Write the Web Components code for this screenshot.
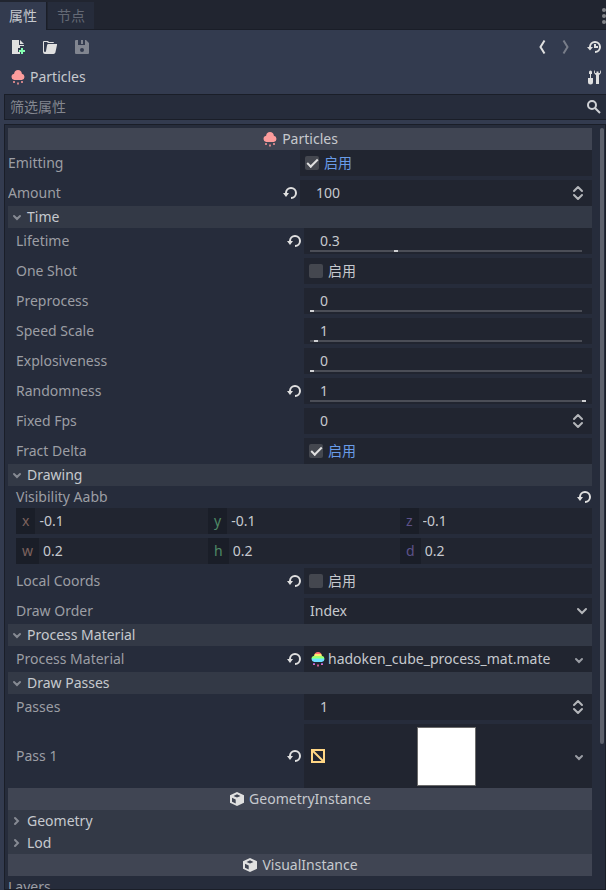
<!DOCTYPE html>
<html lang="zh-CN">
<head>
<meta charset="utf-8">
<title>Inspector</title>
<style>
:root{
  --base:#333b4f; --dark:#262c3b; --darker:#212530; --edge:#1a1e28;
  --category:#404553; --section:#333946;
  --text:#c6c9ce; --label:#9c9ea4; --accent:#699ce8; --icon:#e0e0e0; --box:#44474f;
}
html,body{margin:0;height:100%;background:var(--base)}
body{font:14px/22px "Noto Sans","Noto Sans CJK SC",sans-serif;color:var(--text);overflow:hidden}
</style>
</head>
<body>
<inspector-dock>
  <property-tree>
    <prop-category icon="particles">Particles</prop-category>
    <prop-group>
      <prop-check label="Emitting" checked></prop-check>
      <prop-number label="Amount" value="100" revert></prop-number>
    </prop-group>
    <prop-section name="Time" open>
      <prop-slider label="Lifetime" value="0.3" pos="31" revert></prop-slider>
      <prop-check label="One Shot"></prop-check>
      <prop-slider label="Preprocess" value="0" pos="0"></prop-slider>
      <prop-slider label="Speed Scale" value="1" pos="1.5"></prop-slider>
      <prop-slider label="Explosiveness" value="0" pos="0"></prop-slider>
      <prop-slider label="Randomness" value="1" pos="100" revert></prop-slider>
      <prop-number label="Fixed Fps" value="0"></prop-number>
      <prop-check label="Fract Delta" checked></prop-check>
    </prop-section>
    <prop-section name="Drawing" open>
      <prop-aabb label="Visibility Aabb"></prop-aabb>
      <prop-check label="Local Coords" revert></prop-check>
      <prop-select label="Draw Order" value="Index"></prop-select>
    </prop-section>
    <prop-section name="Process Material" open>
      <prop-resource label="Process Material" icon="material" revert>hadoken_cube_process_mat.mate</prop-resource>
    </prop-section>
    <prop-section name="Draw Passes" open>
      <prop-number label="Passes" value="1"></prop-number>
      <prop-resource label="Pass 1" icon="mesh" preview revert></prop-resource>
    </prop-section>
    <prop-category icon="cube">GeometryInstance</prop-category>
    <prop-section name="Geometry"></prop-section>
    <prop-section name="Lod"></prop-section>
    <prop-category icon="cube">VisualInstance</prop-category>
    <prop-heading label="Layers"></prop-heading>
  </property-tree>
</inspector-dock>

<script>
const CLOUD = 'M8 1a4 4.4 0 0 0-3.9 3.7A3.2 3.2 0 0 0 4.2 11h7.6a3.2 3.2 0 0 0 .1-6.3A4 4.4 0 0 0 8 1z';
const DROPS = '<path d="M3 12h2v2H3zM11 12h2v2h-2zM7 13.5h2v2H7z"';
const ICONS = {
  particles: `<path fill="#fc9c9c" d="${CLOUD}"/>${DROPS} fill="#cc8187"/>`,
  material: `<defs><linearGradient id="g" x1="0" y1="1" x2="0" y2="11" gradientUnits="userSpaceOnUse">
    <stop offset=".2" stop-color="#ff7070"/><stop offset=".2" stop-color="#ffeb70"/><stop offset=".42" stop-color="#ffeb70"/>
    <stop offset=".42" stop-color="#9dff70"/><stop offset=".6" stop-color="#9dff70"/><stop offset=".6" stop-color="#70ffb9"/>
    <stop offset=".72" stop-color="#70ffb9"/><stop offset=".72" stop-color="#70deff"/></linearGradient></defs>
    <path fill="url(#g)" d="${CLOUD}"/><path fill="#9f70ff" opacity=".75" d="M3 12h2v2H3zM11 12h2v2h-2z"/><path fill="#ff70ac" opacity=".75" d="M3 13h2v1H3zM11 13h2v1h-2zM7 13.500h2v2H7z"/>`,
  mesh: '<path fill="none" stroke="#ffd684" stroke-width="2" d="M2 2h12v12H2zM2 2l12 12"/>',
  cube: '<path fill-rule="evenodd" fill="#e0e0e0" d="M8 1l7 3.200v7.600L8 15l-7-3.200V4.200zM8 3.200L4.500 4.900 8 6.600l3.500-1.700zM3 6.700V10.700L6.700 12.500V8.500z"/>',
  reload: '<path d="M9 2a6 6 0 0 0-6 6H1l3 4 3-4H5a4 4 0 1 1 4 4v2A6 6 0 1 0 9 2z"/>',
  newfile: '<path d="M2 1v14h8v-2H8v-4h2V7h4V6H9V1zM10 1v4h4z"/><path fill="#84ffb1" d="M11 9h2v2h2v2h-2v2h-2v-2H9v-2h2z"/>',
  load: '<path d="M2 2a1 1 0 0 0-1 1v10a2 2 0 0 0 2 2h8.500a2 2 0 0 0 1.900-1.500L15 6V5H6.500A1.500 1.500 0 0 0 5 6.400L4 12a1 1 0 0 1-2 0V3h3l1 1h6a1 1 0 0 0-1-1H7L6 2z"/>',
  save: '<path opacity=".45" fill-rule="evenodd" d="M2 1a1 1 0 0 0-1 1v12a1 1 0 0 0 1 1h12a1 1 0 0 0 1-1V4l-3-3h-1v5H4V1zm5 0v4h2V1zM8 9a2 2 0 1 1 0 4 2 2 0 0 1 0-4z"/>',
  back: '<path fill="none" stroke="#e0e0e0" stroke-width="2" d="M10.500 1.500L6.500 8l4 6.500"/>',
  forward: '<path fill="none" stroke="#e0e0e0" stroke-width="2" opacity=".4" d="M5.500 1.500l4 6.500-4 6.500"/>',
  history: '<path d="M9 2a6 6 0 0 0-6 6H1l3 3.500L7 8H5a4 4 0 1 1 4 4v2A6 6 0 1 0 9 2z"/><path d="M8 5h2v2h2v2H8z"/>',
  tools: '<path d="M3 3a1.500 1.500 0 0 1 3 0v2H5v4h2v4a2.500 2.500 0 0 1-5 0V9h2V5H3zM9 1a3 3 0 0 0 1 5v9h3V6a3 3 0 0 0 1-5v3h-1.500V2.500h-2V4H9z"/>',
  search: '<circle cx="6" cy="6" r="4" fill="none" stroke="#d0d2d6" stroke-width="2"/><path stroke="#d0d2d6" stroke-width="2" d="M9 9l5 5"/>',
  down: '<path fill="none" stroke="#9a9da4" stroke-width="2" stroke-linecap="round" d="M5 8l3 3 3-3"/>',
  option: '<path fill="none" stroke="#b4b6ba" stroke-width="2" stroke-linecap="round" d="M4 6l4 4 4-4"/>',
  spin: '<path fill="none" stroke="#b4b6ba" stroke-width="2" stroke-linecap="round" stroke-linejoin="round" d="M4 6l4-4 4 4M4 10l4 4 4-4"/>',
  opened: '<path fill="none" stroke="#868a93" stroke-width="2" stroke-linecap="round" d="M6 7l3 3 3-3"/>',
  closed: '<path fill="none" stroke="#868a93" stroke-width="2" stroke-linecap="round" d="M7 5l3 3-3 3"/>',
  dots: '<circle cx="4" cy="3" r="2"/><circle cx="4" cy="9" r="2"/><circle cx="4" cy="15" r="2"/>'
};
const icon = (name, h = 16) => `<svg viewBox="0 0 16 ${h}" width="16" height="${h}" fill="#e0e0e0" aria-hidden="true">${ICONS[name]}</svg>`;
const BASE = `
  *{box-sizing:border-box}
  :host{display:block}
  svg{display:block;flex:none}
  button,input,select{font:inherit;color:inherit;background:none;border:0;margin:0;padding:0;border-radius:0;outline:none;min-width:0}
  button{display:flex;align-items:center;text-align:left}`;

class Base extends HTMLElement {
  constructor() {
    super();
    this.attachShadow({ mode: 'open' });
  }
  connectedCallback() {
    this.shadowRoot.innerHTML = `<style>${BASE}${this.css()}</style>${this.html()}`;
  }
  attr(n) { return this.getAttribute(n) || ''; }
}

class InspectorDock extends Base {
  css() { return `
    :host{display:flex;flex-direction:column;height:100vh;overflow:hidden}
    nav{display:flex;height:30px;padding-top:2px;background:var(--darker);border-bottom:1px solid var(--edge);flex:none}
    nav button{padding:0 9px;height:28px;margin-bottom:-1px}
    .on{background:var(--base);border-right:1px solid var(--edge)}
    .off{background:var(--dark);margin-left:1px;height:27px;color:#646975}
    .menu{margin-left:auto;margin-right:-10px;padding:0;opacity:.5}
    .bar{display:flex;align-items:center;height:30px;padding:0 4px 0 10px;flex:none}
    .tools{margin-top:2px;gap:16px}
    .right{display:flex;gap:8px;margin-left:auto}
    .right > :last-child{margin-left:4px}
    .name{gap:4px}
    .name button{margin-left:auto}
    .search{display:flex;align-items:center;height:26px;margin:2px 0 4px 4px;padding:0 4px 0 5px;background:var(--dark);border:1px solid var(--edge);border-right:0;flex:none}
    .search input{flex:1}
    .search input::placeholder{color:#83868f;opacity:1}
  `; }
  html() { return `
    <nav><button class="on">属性</button><button class="off">节点</button><button class="menu" aria-label="menu">${icon('dots', 18)}</button></nav>
    <div class="bar tools">
      <button aria-label="new">${icon('newfile')}</button><button aria-label="load">${icon('load')}</button><button aria-label="save">${icon('save')}</button>
      <div class="right"><button aria-label="back">${icon('back')}</button><button aria-label="forward">${icon('forward')}</button><button aria-label="history">${icon('history')}</button></div>
    </div>
    <div class="bar name">${icon('particles')}<span>Particles</span><button aria-label="tools">${icon('tools')}</button></div>
    <div class="search"><input type="text" placeholder="筛选属性" aria-label="筛选属性">${icon('search')}</div>
    <slot></slot>`; }
}

class PropertyTree extends Base {
  css() { return `
    :host{display:flex;flex:1;min-height:0;margin-left:4px;padding:3px 1px 0 3px;gap:8px;background:var(--dark);border:1px solid var(--edge);overflow:hidden}
    main{flex:1;min-width:0;overflow:hidden}
    .thumb{width:4px;height:81%;border-radius:2px;background:#5d616c}
  `; }
  html() { return `<main><slot></slot></main><div class="thumb"></div>`; }
}

class PropCategory extends Base {
  css() { return `:host{display:flex;align-items:center;justify-content:center;gap:4px;height:22px;background:var(--category)}`; }
  html() { return `${icon(this.attr('icon'))}<slot></slot>`; }
}

class PropGroup extends Base {
  css() { return `:host{display:flex;flex-direction:column;gap:4px}`; }
  html() { return `<slot></slot>`; }
}

class PropSection extends Base {
  css() { return `
    button{width:100%;height:22px;gap:3px;background:var(--section)}
    .body{display:flex;flex-direction:column;gap:4px;padding-left:8px}
  `; }
  html() {
    const open = this.hasAttribute('open');
    return `<button aria-expanded="${open}">${icon(open ? 'opened' : 'closed')}${this.attr('name')}</button>${open ? '<div class="body"><slot></slot></div>' : ''}`;
  }
}

class PropRow extends Base {
  css() { return `
    :host{display:grid;grid-template-columns:repeat(2,minmax(0,1fr));min-height:26px}
    .left{display:flex;align-items:center;padding-right:2px}
    .left label{flex:1;color:var(--label)}
    .field{display:flex;align-items:center;background:var(--darker)}
  ` + this.fieldCss(); }
  html() {
    const revert = this.hasAttribute('revert') ? `<button aria-label="revert">${icon('reload')}</button>` : '';
    return `<div class="left"><label for="f">${this.attr('label')}</label>${revert}</div>${this.field()}`;
  }
}

class PropCheck extends PropRow {
  fieldCss() { return `
    .field{padding-left:5px;gap:5px}
    input{appearance:none;width:14px;height:14px;border-radius:2px;background:var(--box);display:grid;place-items:center}
    input:checked::before{content:"";width:9px;height:4px;border:solid var(--icon);border-width:0 0 2px 2px;transform:translateY(-1px) rotate(-45deg)}
    input:checked + span{color:var(--accent)}
  `; }
  field() { return `<label class="field"><input type="checkbox" id="f" ${this.hasAttribute('checked') ? 'checked' : ''}><span>启用</span></label>`; }
}

class PropNumber extends PropRow {
  fieldCss() { return `
    .field{padding:0 6px 0 16px}
    input{flex:1;appearance:textfield}
    input::-webkit-inner-spin-button{appearance:none}
  `; }
  field() { return `<div class="field"><input type="number" id="f" value="${this.attr('value')}"><button aria-label="step">${icon('spin')}</button></div>`; }
}

class PropSlider extends PropRow {
  fieldCss() { return `
    .field{flex-direction:column;align-items:stretch;padding:4px 6px 2px}
    #f{height:18px;line-height:18px;padding-left:10px}
    [type=range]{appearance:none;height:2px;width:100%;background:linear-gradient(#4b4e57,#4b4e57) left/calc(100% - 4px) 100% no-repeat}
    [type=range]::-webkit-slider-thumb{appearance:none;width:4px;height:2px;background:#cfd0d3}
  `; }
  field() { return `<div class="field"><input type="text" id="f" value="${this.attr('value')}"><input type="range" min="0" max="100" step="0.5" value="${this.attr('pos')}" aria-label="${this.attr('label')}"></div>`; }
}

class PropSelect extends PropRow {
  fieldCss() { return `
    .field{display:grid;align-items:center}
    select,svg{grid-area:1/1}
    select{appearance:none;height:26px;padding:0 24px 0 6px}
    svg{justify-self:end;margin-right:2px;pointer-events:none}
  `; }
  field() { return `<div class="field"><select id="f"><option>${this.attr('value')}</option></select>${icon('option')}</div>`; }
}

class PropResource extends PropRow {
  fieldCss() { return `
    .field{padding:0 5px 0 6px;gap:6px}
    #f{flex:1;gap:2px;height:100%;overflow:hidden;white-space:nowrap}
    .preview{width:59px;height:59px;margin:3px auto 2px;background:#fff;border:1px solid #6b6b6b}
  `; }
  field() { return `<div class="field"><button id="f">${icon(this.attr('icon'))}${this.hasAttribute('preview') ? '<span class="preview"></span>' : '<slot></slot>'}</button><button aria-label="menu">${icon('down')}</button></div>`; }
}

class PropHeading extends Base {
  css() { return `:host{height:22px;color:var(--label)}`; }
  html() { return this.attr('label'); }
}

class PropAabb extends Base {
  css() { return `
    .head{display:flex;align-items:center;height:22px;color:var(--label)}
    .head span{flex:1}
    .grid{display:grid;grid-template-columns:repeat(3,minmax(0,1fr));row-gap:4px}
    label{display:flex;height:26px;line-height:26px;background:var(--darker)}
    label span{padding:0 6px;background:var(--edge)}
    label input{flex:1;padding-left:4px}
    .r{color:#7d625e}.g{color:#4f8a66}.b{color:#5d5289}
  `; }
  html() {
    const cells = [['x','-0.1','r'],['y','-0.1','g'],['z','-0.1','b'],['w','0.2','r'],['h','0.2','g'],['d','0.2','b']];
    return `<div class="head"><span>${this.attr('label')}</span><button aria-label="revert">${icon('reload')}</button></div>
      <div class="grid">${cells.map(([n, v, c]) => `<label><span class="${c}">${n}</span><input type="text" value="${v}"></label>`).join('')}</div>`;
  }
}

customElements.define('inspector-dock', InspectorDock);
customElements.define('property-tree', PropertyTree);
customElements.define('prop-category', PropCategory);
customElements.define('prop-group', PropGroup);
customElements.define('prop-section', PropSection);
customElements.define('prop-check', PropCheck);
customElements.define('prop-number', PropNumber);
customElements.define('prop-slider', PropSlider);
customElements.define('prop-select', PropSelect);
customElements.define('prop-resource', PropResource);
customElements.define('prop-heading', PropHeading);
customElements.define('prop-aabb', PropAabb);
</script>
</body>
</html>
